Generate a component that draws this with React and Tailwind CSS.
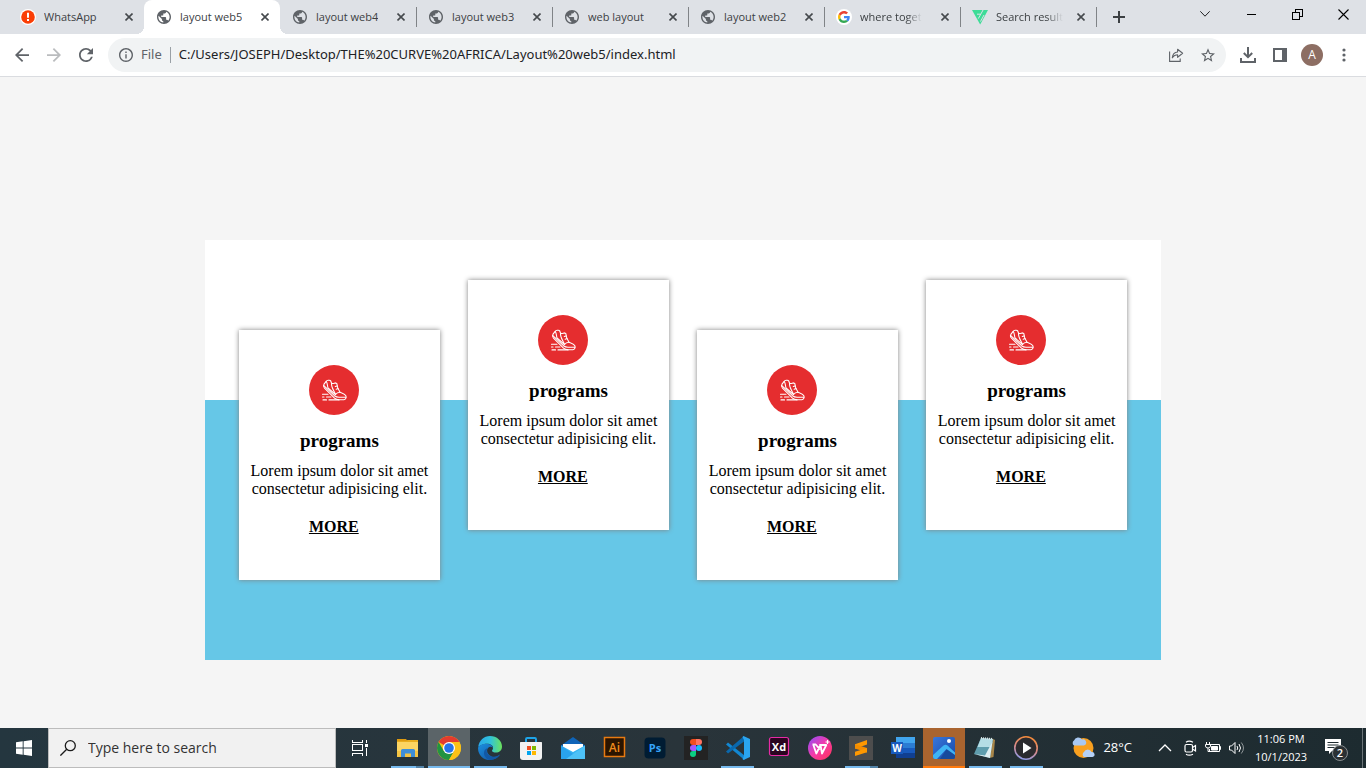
import React from "react";

function Globe() {
  return (
    <svg viewBox="2 2 20 20" className="size-3.5 fill-[#5f6368]" aria-hidden="true">
      <path d="M12 2C6.48 2 2 6.48 2 12s4.48 10 10 10 10-4.48 10-10S17.52 2 12 2zm-1 17.93c-3.95-.49-7-3.85-7-7.93 0-.62.08-1.21.21-1.79L9 15v1c0 1.1.9 2 2 2v1.93zm6.9-2.54c-.26-.81-1-1.39-1.9-1.39h-1v-3c0-.55-.45-1-1-1H8v-2h2c.55 0 1-.45 1-1V7h2c1.1 0 2-.9 2-2v-.41c2.93 1.19 5 4.06 5 7.41 0 2.08-.8 3.97-2.1 5.39z" />
    </svg>
  );
}

function Alert() {
  return (
    <svg viewBox="0 0 16 16" className="size-4" aria-hidden="true">
      <circle cx="8" cy="8" r="8" fill="#fff" />
      <circle cx="8" cy="8" r="6.8" fill="#fa3e06" />
      <path d="M7 3.8h2v5H7zM7 10h2v2H7z" fill="#fff" />
    </svg>
  );
}

function Google() {
  return (
    <svg viewBox="0 0 16 16" className="size-4" aria-hidden="true">
      <circle cx="8" cy="8" r="8" fill="#fff" />
      <g transform="translate(2 2) scale(.25)">
        <path fill="#EA4335" d="M24 9.5c3.54 0 6.71 1.22 9.21 3.6l6.85-6.85C35.9 2.38 30.47 0 24 0 14.62 0 6.51 5.38 2.56 13.22l7.98 6.19C12.43 13.72 17.74 9.5 24 9.5z" />
        <path fill="#4285F4" d="M46.98 24.55c0-1.57-.15-3.09-.38-4.55H24v9.02h12.94c-.58 2.96-2.26 5.48-4.78 7.18l7.73 6c4.51-4.18 7.09-10.36 7.09-17.65z" />
        <path fill="#FBBC05" d="M10.53 28.59c-.48-1.45-.76-2.99-.76-4.59s.27-3.14.76-4.59l-7.98-6.19C.92 16.46 0 20.12 0 24c0 3.88.92 7.54 2.56 10.78l7.97-6.19z" />
        <path fill="#34A853" d="M24 48c6.48 0 11.93-2.13 15.89-5.81l-7.73-6c-2.15 1.45-4.92 2.3-8.16 2.3-6.26 0-11.57-4.22-13.47-9.91l-7.98 6.19C6.51 42.62 14.62 48 24 48z" />
      </g>
    </svg>
  );
}

function Freelance() {
  return (
    <svg viewBox="0 0 16 16" className="size-4" aria-hidden="true">
      <path d="M0 1h16L8.200 15.500z" fill="#3ddc97" />
      <path d="M11.200 .8 6.300 9.600M12 6 8.500 12.500M5 5.200h3.500" stroke="#dee1e6" strokeWidth="1" />
    </svg>
  );
}

const tabs = [
  { label: "WhatsApp", icon: <Alert /> },
  { label: "layout web5", icon: <Globe />, active: true },
  { label: "layout web4", icon: <Globe />, divider: true },
  { label: "layout web3", icon: <Globe />, divider: true },
  { label: "web layout", icon: <Globe />, divider: true },
  { label: "layout web2", icon: <Globe />, divider: true },
  { label: "where toget", icon: <Google />, divider: true, fade: true },
  { label: "Search result", icon: <Freelance />, divider: true, fade: true },
];

function Tab({ label, icon, active, divider, fade }) {
  return (
    <div
      className={
        "relative flex h-full w-[136px] shrink items-center pl-3 pr-[5px] " +
        (active ? "rounded-t-lg bg-white" : "")
      }
    >
      {active && (
        <>
          <span className="absolute bottom-0 -left-2 size-2 bg-[radial-gradient(circle_at_0_0,transparent_8px,white_8px)]" />
          <span className="absolute bottom-0 -right-2 size-2 bg-[radial-gradient(circle_at_100%_0,transparent_8px,white_8px)]" />
        </>
      )}
      <button type="button" className="flex min-w-0 flex-1 items-center gap-2 text-left text-[11px] leading-4 text-[#3c4043]">
        <span className="flex size-4 shrink-0 items-center justify-center">{icon}</span>
        <span
          className={
            "overflow-hidden whitespace-nowrap " +
            (fade ? "[mask-image:linear-gradient(to_right,black_75%,transparent)]" : "")
          }
        >
          {label}
        </span>
      </button>
      <button type="button" aria-label={"Close " + label} className="flex size-5 shrink-0 items-center justify-center">
        <svg viewBox="0 0 8 8" className="size-2 stroke-[#45494d]" strokeWidth="1.6">
          <path d="M.5.5l7 7M7.500.5l-7 7" />
        </svg>
      </button>
      {divider && <span className="absolute -right-px top-[7px] h-5 w-px bg-[#808387]" />}
    </div>
  );
}

function WindowButton({ label, children }) {
  return (
    <button type="button" aria-label={label} className="flex h-7 w-[46px] items-center justify-center">
      <svg viewBox="0 0 11 11" className="size-[11px] fill-none stroke-black" shapeRendering="crispEdges">
        {children}
      </svg>
    </button>
  );
}

function TabStrip() {
  return (
    <div className="flex h-[34px] bg-[#dee1e6] pl-2">
      <div className="flex min-w-0">
        {tabs.map((t) => (
          <Tab key={t.label} {...t} />
        ))}
      </div>
      <button type="button" aria-label="New tab" className="ml-[9px] flex w-7 items-center justify-center">
        <svg viewBox="0 0 12 12" className="size-3 stroke-[#3c4043]" strokeWidth="2">
          <path d="M6 0v12M0 6h12" />
        </svg>
      </button>
      <div className="ml-auto flex">
        <button type="button" aria-label="Search tabs" className="flex h-7 w-[46px] items-center justify-center">
          <svg viewBox="0 0 10 6" className="h-1.5 w-2.5 fill-none stroke-[#202124]">
            <path d="M.3.3L5 5.200 9.700.3" />
          </svg>
        </button>
        <WindowButton label="Minimize">
          <path d="M1 5.500h9" />
        </WindowButton>
        <WindowButton label="Restore">
          <path d="M.5 3.500h7v7h-7zM3.500 3V.5h7v7H8" />
        </WindowButton>
        <button type="button" aria-label="Close window" className="flex h-7 w-[46px] items-center justify-center">
          <svg viewBox="0 0 11 11" className="size-[11px] stroke-black" strokeWidth="1.100">
            <path d="M.5.5l10 10M10.500.5l-10 10" />
          </svg>
        </button>
      </div>
    </div>
  );
}

function ToolButton({ label, dim, children }) {
  return (
    <button
      type="button"
      aria-label={label}
      className={"flex size-8 shrink-0 items-center justify-center " + (dim ? "text-[#babcbe]" : "text-[#5f6368]")}
    >
      {children}
    </button>
  );
}

function Toolbar() {
  return (
    <div className="flex h-[43px] items-center border-b border-[#dadce0] bg-white px-1.5">
      <ToolButton label="Back">
        <svg viewBox="4 4 16 16" className="size-3.5" fill="currentColor">
          <path d="M20 11H7.830l5.590-5.590L12 4l-8 8 8 8 1.410-1.410L7.830 13H20v-2z" />
        </svg>
      </ToolButton>
      <ToolButton label="Forward" dim>
        <svg viewBox="4 4 16 16" className="size-3.5" fill="currentColor">
          <path d="M12 4l-1.410 1.410L16.170 11H4v2h12.170l-5.580 5.590L12 20l8-8z" />
        </svg>
      </ToolButton>
      <ToolButton label="Reload">
        <svg viewBox="4 4 16 16" className="size-3.5" fill="currentColor">
          <path d="M17.650 6.350A7.958 7.958 0 0012 4c-4.420 0-7.990 3.580-7.990 8s3.570 8 7.990 8c3.730 0 6.840-2.550 7.730-6h-2.080A5.990 5.990 0 0112 18c-3.310 0-6-2.690-6-6s2.690-6 6-6c1.660 0 3.140.69 4.220 1.780L13 11h7V4l-2.350 2.350z" />
        </svg>
      </ToolButton>
      <div className="mx-1.5 flex h-[34px] min-w-0 flex-1 items-center rounded-full bg-[#f1f3f4] pl-2.5 pr-0.5 font-['Noto_Sans','Open_Sans',sans-serif]">
        <svg viewBox="2 2 20 20" className="mr-2 ml-px size-3.5 shrink-0 fill-[#5f6368]" aria-hidden="true">
          <path d="M11 7h2v2h-2zm0 4h2v6h-2zm1-9C6.480 2 2 6.480 2 12s4.480 10 10 10 10-4.480 10-10S17.520 2 12 2zm0 18c-4.410 0-8-3.590-8-8s3.590-8 8-8 8 3.590 8 8-3.590 8-8 8z" />
        </svg>
        <label htmlFor="address" className="text-[13px] text-[#5f6368]">File</label>
        <span className="mx-2 h-4 w-px bg-[#9aa0a6]" />
        <input
          id="address"
          type="text"
          defaultValue="C:/Users/JOSEPH/Desktop/THE%20CURVE%20AFRICA/Layout%20web5/index.html"
          className="min-w-0 flex-1 bg-transparent text-[13px] text-[#202124] outline-none"
        />
        <ToolButton label="Share">
          <svg viewBox="0 0 16 14" className="h-3.5 w-4 fill-none stroke-current" strokeWidth="1.100">
            <path d="M1.600 3.500v9.900h10.600V10.500" />
            <path d="M4.300 9.800C4.600 6.300 6.400 4.200 9.600 4V1.300L14.600 5.300 9.600 9.300V6.800C7.300 6.800 5.600 7.800 4.300 9.800z" strokeLinejoin="round" />
          </svg>
        </ToolButton>
        <ToolButton label="Bookmark this page">
          <svg viewBox="2 2 20 19" className="size-3.5" fill="currentColor">
            <path d="M22 9.240l-7.190-.62L12 2 9.190 8.630 2 9.240l5.460 4.730L5.820 21 12 17.270 18.180 21l-1.630-7.030L22 9.240zM12 15.400l-3.760 2.270 1-4.280-3.320-2.880 4.380-.38L12 6.100l1.710 4.040 4.380.38-3.320 2.880 1 4.280L12 15.400z" />
          </svg>
        </ToolButton>
      </div>
      <ToolButton label="Downloads">
        <svg viewBox="0 0 16 16" className="size-4 fill-none stroke-current" strokeWidth="2">
          <path d="M8 0v10M3.800 6L8 10.200 12.200 6M1 11v4h14v-4" />
        </svg>
      </ToolButton>
      <ToolButton label="Side panel">
        <svg viewBox="0 0 14 14" className="size-3.5" fill="currentColor">
          <path d="M0 0h14v14H0zM2 2v10h7V2z" fillRule="evenodd" />
        </svg>
      </ToolButton>
      <ToolButton label="Profile">
        <span className="flex size-[22px] items-center justify-center rounded-full bg-[#8d6e63] text-xs text-white">A</span>
      </ToolButton>
      <ToolButton label="Menu">
        <svg viewBox="0 0 4 14" className="h-3.5 w-1" fill="currentColor">
          <circle cx="2" cy="2" r="1.600" />
          <circle cx="2" cy="7" r="1.600" />
          <circle cx="2" cy="12" r="1.600" />
        </svg>
      </ToolButton>
    </div>
  );
}

function ShoeBadge() {
  return (
    <svg viewBox="0 0 50 50" className="ml-[70px] size-[50px]" aria-hidden="true">
      <circle cx="25" cy="25" r="25" fill="#e52d2f" />
      <g fill="none" stroke="#fff" strokeWidth="1.100" strokeLinecap="round" strokeLinejoin="round">
        <path d="M15.500 23.200C14.200 21.800 14.100 20.600 15 19.200L17.200 16.300C18 15.200 20.500 14.900 21.300 15.500C22.300 16.200 22 17.700 22.600 18.300C23.500 19 25.500 18 26.500 17.900L27.800 18.500C28 21.500 29 24.500 31 27.200C33 28 35.500 28.500 36.700 30.500C37.600 32.200 37 34.500 35 34.700H30C28 34.700 26.700 34.200 25.500 33.200Z" />
        <path d="M14.800 20.600L25.500 30.700C27 31.900 28 32.200 30 32.200H36.800" />
        <path d="M17.200 16.500C18.600 18.300 18.200 20.500 19 23L26.500 29.500C27.500 28 29 27.200 31 27.200" />
        <path d="M22.600 18.300C22 21.500 24 24 26.500 29.500M26.300 21.500l1.700-.6M27.200 24.200l1.900-.7" />
        <path d="M13.500 29.300h5.500M13.500 32h1.500M17.500 32h4.500M14 34.900h3.500M20 34.900h10" />
      </g>
    </svg>
  );
}

function ProgramCard({ low }) {
  return (
    <article
      className={
        "h-[250px] bg-white pt-[35px] text-center font-['Liberation_Serif',serif] text-black shadow-[0_0_5px_gray] " +
        (low ? "mt-[50px]" : "")
      }
    >
      <ShoeBadge />
      <h3 className="mt-4 text-[19px] leading-5 font-bold">programs</h3>
      <p className="mt-[11px] text-base leading-[18px]">Lorem ipsum dolor sit amet consectetur adipisicing elit.</p>
      <a href="#more" className="mt-5 ml-[70px] block w-fit text-base leading-[18px] font-bold underline">
        MORE
      </a>
    </article>
  );
}

function Page() {
  return (
    <main className="flex flex-1 flex-col items-center bg-[#f5f5f5] pt-[163px] pb-[68px]">
      <section className="grid min-h-[420px] w-[70%] grid-cols-4 items-start gap-7 bg-[#66c7e7] bg-[linear-gradient(white_160px,transparent_160px)] px-[34px] pt-10">
        <ProgramCard low />
        <ProgramCard />
        <ProgramCard low />
        <ProgramCard />
      </section>
    </main>
  );
}

function AppIcon({ children }) {
  return (
    <svg viewBox="0 0 24 24" className="size-6" aria-hidden="true">
      {children}
    </svg>
  );
}

const apps = [
  {
    name: "File Explorer",
    state: "multi",
    icon: (
      <AppIcon>
        <path d="M1 3h9l2 2.500H1z" fill="#e09b10" />
        <path d="M1 5h20q1 0 1 1v15H1z" fill="#fcd462" />
        <path d="M1 5h9l1.500-1H22v2H1z" fill="#e9ad1e" />
        <path d="M1 15h21v6H1z" fill="#f5c443" />
        <path d="M5 21v-6.500Q5 13 6.500 13h11q1.500 0 1.500 1.500V21h-4v-3.500H9V21z" fill="#3f8fd8" />
      </AppIcon>
    ),
  },
  {
    name: "Google Chrome",
    state: "current",
    icon: (
      <AppIcon>
        <circle cx="12" cy="12" r="12" fill="#fbc116" />
        <path d="M12 12L1.610 6A12 12 0 0122.390 6z" fill="#e33b2e" />
        <path d="M1.610 6A12 12 0 0012 24l5.200-9L12 12 6.800 15z" fill="#229342" />
        <path d="M12 6h10.390A12 12 0 0112 24l5.200-9z" fill="#fbc116" />
        <circle cx="12" cy="12" r="6" fill="#fff" />
        <circle cx="12" cy="12" r="4.800" fill="#2673e8" />
      </AppIcon>
    ),
  },
  {
    name: "Microsoft Edge",
    state: "open",
    icon: (
      <AppIcon>
        <defs>
          <linearGradient id="edgeTop" x1="0" x2="1" y1=".3" y2=".3">
            <stop offset="0" stopColor="#2aa7e8" />
            <stop offset=".5" stopColor="#2fc1dd" />
            <stop offset="1" stopColor="#6be35c" />
          </linearGradient>
          <linearGradient id="edgeLow" x1="0" x2="1" y1="0" y2="1">
            <stop offset="0" stopColor="#1b8fe0" />
            <stop offset="1" stopColor="#124f9c" />
          </linearGradient>
        </defs>
        <path d="M.2 11C1 4.500 6 0 12 0c7 0 12 5 12 10.500 0 4-3 6-6 6-2.300 0-4-.8-4-1.800 0-.7 1-1 1-3C15 9.500 12.500 7.800 9 7.800c-4 0-7.500 2-8.800 3.200z" fill="url(#edgeTop)" />
        <path d="M.1 11.500C1.500 9 4.700 7.600 8.700 7.700c3.800.1 6.200 2.200 6.300 4.200-1.200-1.400-3.600-1.400-5 .2-2 2.300-.8 7 4 8.300 3 .8 6-.1 8-1.800C20 22 16 24 12 24 5 24-.4 18.500.1 11.500z" fill="url(#edgeLow)" />
        <path d="M9.800 12.100c-2 2.300-1.500 7.200 3.800 8.600 3.400.9 6-.4 8.400-2.100-2 3.300-5.500 5.400-9.700 5.400C8 23.300 5.800 19.500 6 16.800c.1-2.300 1.500-4 3.800-4.700z" fill="#1258a5" />
      </AppIcon>
    ),
  },
  {
    name: "Microsoft Store",
    icon: (
      <AppIcon>
        <path d="M7 7V3.200Q7 2 8.200 2h7.600Q17 2 17 3.200V7" fill="none" stroke="#1ea4e8" strokeWidth="2" />
        <path d="M1.500 6h21q.5 0 .5.5V21q0 3-3 3H4q-3 0-3-3V6.500Q1 6 1.500 6z" fill="#f2f2f2" />
        <path d="M8 10h4v4H8z" fill="#f04f23" />
        <path d="M13 10h4v4h-4z" fill="#7fba00" />
        <path d="M8 15h4v4H8z" fill="#00a4ef" />
        <path d="M13 15h4v4h-4z" fill="#feb800" />
      </AppIcon>
    ),
  },
  {
    name: "Mail",
    icon: (
      <AppIcon>
        <path d="M0 9.500L12 1l12 8.500V12H0z" fill="#0f64b8" />
        <path d="M2 8h20v8H2z" fill="#fff" />
        <path d="M0 9.500l12 6.500 12-6.500V23H0z" fill="#35b2f2" />
        <path d="M0 9.500L19 23H0z" fill="#29a2ec" />
        <path d="M24 9.500L5 23h19z" fill="#4dc1f7" />
      </AppIcon>
    ),
  },
  {
    name: "Adobe Illustrator",
    icon: (
      <AppIcon>
        <path d="M2.500 1.500h20v19h-20z" fill="#2b1400" stroke="#e87a11" strokeWidth="1.500" />
        <text x="12.500" y="15.500" textAnchor="middle" fill="#ef8a1d" className="font-['Open_Sans',sans-serif] text-[12px] font-semibold">Ai</text>
      </AppIcon>
    ),
  },
  {
    name: "Adobe Photoshop",
    icon: (
      <AppIcon>
        <rect x="1.500" y="1.500" width="21" height="21" rx="4" fill="#001c33" />
        <text x="12" y="16" textAnchor="middle" fill="#35a4fb" className="font-['Open_Sans',sans-serif] text-[11px] font-bold">Ps</text>
      </AppIcon>
    ),
  },
  {
    name: "Figma",
    icon: (
      <AppIcon>
        <path d="M0 0h24v24H0z" fill="#232323" />
        <path d="M12 3H9a3 3 0 000 6h3z" fill="#f24e1e" />
        <path d="M12 3h3a3 3 0 010 6h-3z" fill="#ff7262" />
        <path d="M12 9H9a3 3 0 000 6h3z" fill="#a259ff" />
        <circle cx="15" cy="12" r="3" fill="#1abcfe" />
        <path d="M12 15H9a3 3 0 103 3z" fill="#0acf83" />
      </AppIcon>
    ),
  },
  {
    name: "Visual Studio Code",
    state: "open",
    icon: (
      <AppIcon>
        <path d="M0 8.500L2 6.500 18.500 19.500V24z" fill="#1287d2" />
        <path d="M0 15.500L18 0v5.500L2 17.500z" fill="#0a68ad" />
        <path d="M17.500 0L24 3v18l-6.500 3-1-1 1.500-3V4l-1.500-3z" fill="#2aa5f0" />
      </AppIcon>
    ),
  },
  {
    name: "Adobe XD",
    icon: (
      <AppIcon>
        <rect x="2.500" y="1.500" width="19" height="18" rx="2" fill="#2a0520" stroke="#e72ba5" strokeWidth="1.200" />
        <text x="12" y="14.500" textAnchor="middle" fill="#fff" className="font-['Open_Sans',sans-serif] text-[11px] font-bold">Xd</text>
      </AppIcon>
    ),
  },
  {
    name: "WPS Office",
    icon: (
      <AppIcon>
        <defs>
          <linearGradient id="wps" x1="0" x2="1" y1="0" y2="1">
            <stop offset="0" stopColor="#8c4dff" />
            <stop offset=".5" stopColor="#f43ba8" />
            <stop offset="1" stopColor="#ff3355" />
          </linearGradient>
        </defs>
        <circle cx="12" cy="12" r="12" fill="url(#wps)" />
        <path d="M4.500 8.500h3.200L12 13.500M5.300 8.800l3 8.700 4.200-8.500 1.500 8.500 4.300-8.500h-7" fill="none" stroke="#fff" strokeWidth="1.800" strokeLinejoin="round" />
        <path d="M17.500 6h4M19.500 4v4" stroke="#fff" strokeWidth="1.200" />
      </AppIcon>
    ),
  },
  {
    name: "Sublime Text",
    state: "multi",
    icon: (
      <AppIcon>
        <path d="M0 0h24v24H0z" fill="#4d4d4d" />
        <path d="M6 8.200L18 4v4.500l-12 4.200z" fill="#ff9800" />
        <path d="M6 8.300l12 3.800v4.300L6 12.600z" fill="#f58d00" />
        <path d="M18 12l-12 3.800V20l12-3.800z" fill="#ff9800" />
      </AppIcon>
    ),
  },
  {
    name: "Microsoft Word",
    icon: (
      <AppIcon>
        <path d="M5 1h19v6H5z" fill="#41a5ee" />
        <path d="M5 7h19v5H5z" fill="#2b7cd3" />
        <path d="M5 12h19v5H5z" fill="#185abd" />
        <path d="M5 17h19v5H5z" fill="#103f91" />
        <path d="M0 6h12v12H0z" fill="#185abd" />
        <text x="6" y="15.500" textAnchor="middle" fill="#fff" className="font-['Open_Sans',sans-serif] text-[10px] font-bold">W</text>
      </AppIcon>
    ),
  },
  {
    name: "Photos",
    state: "attention",
    icon: (
      <AppIcon>
        <defs>
          <linearGradient id="photoSky" x1="0" x2="1" y1="0" y2="1">
            <stop offset="0" stopColor="#3977db" />
            <stop offset="1" stopColor="#1849a9" />
          </linearGradient>
        </defs>
        <rect x="1" y="1" width="22" height="22" rx="2" fill="url(#photoSky)" />
        <path d="M8 23l6-9 3-3.500L23 17v4q0 2-2 2z" fill="#174a9c" />
        <path d="M1 19L11.500 9.500q2-1.500 4 0L23 16.500v2.500L14.500 13 5 23H3q-2 0-2-2z" fill="#3fb4f5" />
        <circle cx="17" cy="5" r="2" fill="#fff" />
      </AppIcon>
    ),
  },
  {
    name: "Notepad",
    state: "open",
    icon: (
      <AppIcon>
        <path d="M18 2l4 2-1.500 17-4 1z" fill="#a8864a" />
        <path d="M8 2l12 1-3 19L1 18z" fill="#5f9dad" />
        <path d="M8 2l12 1-2 8L4.500 11z" fill="#b5dde5" />
        <path d="M1 18l11 1.500 7.500-14L17 22z" fill="#dfeef1" />
        <path d="M8 2l12 1" stroke="#d8e2e4" strokeDasharray="1 1" strokeWidth="2" />
      </AppIcon>
    ),
  },
  {
    name: "Media Player",
    state: "open",
    icon: (
      <AppIcon>
        <defs>
          <linearGradient id="ring" x1=".6" x2=".3" y1="0" y2="1">
            <stop offset="0" stopColor="#f28a3a" />
            <stop offset=".5" stopColor="#d98a86" />
            <stop offset="1" stopColor="#8d9ae8" />
          </linearGradient>
        </defs>
        <circle cx="12" cy="12" r="11.200" fill="#2b2b2e" stroke="url(#ring)" strokeWidth="1.600" />
        <path d="M9 6.500l8.500 5.500L9 17.500z" fill="#fff" />
      </AppIcon>
    ),
  },
];

function AppButton({ name, state, icon }) {
  const tone =
    state === "current" ? "bg-[#5b6468]" : state === "attention" ? "bg-[#a9642f]" : "";
  return (
    <button type="button" aria-label={name} className={"relative flex h-10 items-center justify-center " + tone}>
      {icon}
      {state === "current" && <span className="absolute inset-x-0 bottom-0 h-0.5 bg-[#76b9ed]" />}
      {state === "attention" && <span className="absolute inset-x-0 bottom-0 h-0.5 bg-[#ff7a0d]" />}
      {state === "open" && <span className="absolute inset-x-1 bottom-0 h-0.5 bg-[#76b9ed]" />}
      {state === "multi" && (
        <span className="absolute inset-x-1 bottom-0 flex h-0.5">
          <span className="flex-1 bg-[#76b9ed]" />
          <span className="w-2 bg-[#5283a8]" />
        </span>
      )}
    </button>
  );
}

function Tray() {
  return (
    <div className="ml-auto flex h-full items-center text-white">
      <button type="button" className="mr-[26px] flex items-center gap-2 text-[13px]">
        <svg viewBox="0 0 24 24" className="size-6" aria-hidden="true">
          <circle cx="12.500" cy="12" r="10" fill="#f9a01f" />
          <path d="M3 9.500a3 3 0 010-5A4.500 4.500 0 0111 3.500a3 3 0 012 6z" fill="#a9c8f2" />
          <path d="M13 21a3 3 0 010-5 4 4 0 017.500 0 2.500 2.500 0 011 5z" fill="#b5d0f6" />
        </svg>
        28°C
      </button>
      <button type="button" aria-label="Show hidden icons" className="mr-3">
        <svg viewBox="0 0 14 8" className="h-2 w-3.5 fill-none stroke-white" strokeWidth="1.300">
          <path d="M1 7l6-6 6 6" />
        </svg>
      </button>
      <button type="button" aria-label="Meet now" className="mr-2">
        <svg viewBox="0 0 13 16" className="h-4 w-[13px] fill-none stroke-white" strokeWidth="1.200">
          <rect x="1" y="4.500" width="7.500" height="7.500" rx="1.500" />
          <path d="M8.500 7.500L11.500 5.500v5.500L8.500 9M2 2.200Q5 .2 9 2.200M2 14.200q3 2 7 0" />
        </svg>
      </button>
      <button type="button" aria-label="Battery" className="mr-2">
        <svg viewBox="0 0 16 14" className="h-3.5 w-4 fill-none stroke-white">
          <path d="M5 3.500h9.500v7H4.500V8M14.500 5.500h1v3h-1M1.500 1v2.500M4.500 1v2.500M.500 3.500h5v1.500Q5.500 7 3 7 .500 7 .500 5zM3 7v3.500h2" />
          <path d="M6.500 5.500h6v3.500h-6z" fill="#fff" />
        </svg>
      </button>
      <button type="button" aria-label="Volume" className="mr-2.5">
        <svg viewBox="0 0 16 14" className="h-3.5 w-4 fill-none stroke-white">
          <path d="M.5 5h2l3.500-3.500v11L2.500 9h-2zM8 5q1.500 2 0 4M10 3q3 4 0 8" />
          <path d="M12.300 1.500q4.400 5.500 0 11" opacity=".5" />
        </svg>
      </button>
      <button type="button" className="w-[52px] text-center text-[11px] leading-[18px] whitespace-nowrap">
        11:06 PM
        <br />
        10/1/2023
      </button>
      <button type="button" aria-label="2 notifications" className="ml-4 mr-[13px]">
        <svg viewBox="0 0 26 26" className="size-[26px]" aria-hidden="true">
          <path d="M2 4h16v12H9l-3 3v-3H2z" fill="#fff" />
          <path d="M4.500 7.500h11M4.500 10h11M4.500 12.500h7" stroke="#1f2c31" />
          <circle cx="17" cy="18" r="7.500" fill="#2a3033" stroke="#888d90" />
          <text x="17" y="22" textAnchor="middle" fill="#fff" className="text-[11px] font-semibold">2</text>
        </svg>
      </button>
      <span className="mr-[3px] h-full w-px bg-[#6a7377]" />
    </div>
  );
}

function Taskbar() {
  return (
    <footer className="flex h-10 items-center bg-linear-to-r from-[#24363f] via-[#29343a] to-[#1d2b30]">
      <button type="button" aria-label="Start" className="flex w-12 shrink-0 items-center justify-center">
        <svg viewBox="0 0 16 16" className="size-4 fill-white">
          <path d="M0 2.200L6.700 1.300v6.300H0zM7.600 1.200L16 0v7.600H7.600zM0 8.400h6.700v6.300L0 13.800zM7.600 8.400H16V16l-8.400-1.200z" />
        </svg>
      </button>
      <div className="flex h-10 w-72 shrink-0 items-center gap-3 border border-[#bcbcbc] bg-[#f1f1f1] pl-[11px]">
        <svg viewBox="0 0 16 16" className="size-4 shrink-0 fill-none stroke-[#1b1b1b]" strokeWidth="1.300" aria-hidden="true">
          <circle cx="10.300" cy="5.700" r="5" />
          <path d="M6.700 9.300L.4 15.600" />
        </svg>
        <input
          type="text"
          aria-label="Search"
          placeholder="Type here to search"
          className="min-w-0 flex-1 bg-transparent text-sm text-[#333333] outline-none placeholder:text-[#333333]"
        />
      </div>
      <button type="button" aria-label="Task view" className="flex w-12 shrink-0 items-center justify-center">
        <svg viewBox="0 0 16 16" className="size-4 fill-none stroke-white" shapeRendering="crispEdges">
          <path d="M.5 4.500h10v6H.5zM.5 0v2.500h10V0M.5 16v-2.500h10V16M14.500 0v3M14.500 8v8" />
          <path d="M13 4h3v3h-3z" fill="#fff" stroke="none" />
        </svg>
      </button>
      <nav aria-label="Apps" className="ml-[3px] grid w-[660px] grid-cols-16">
        {apps.map((a) => (
          <AppButton key={a.name} {...a} />
        ))}
      </nav>
      <Tray />
    </footer>
  );
}

export default function App() {
  return (
    <div className="flex min-h-screen flex-col font-['Open_Sans','Noto_Sans',sans-serif]">
      <header>
        <TabStrip />
        <Toolbar />
      </header>
      <Page />
      <Taskbar />
    </div>
  );
}
